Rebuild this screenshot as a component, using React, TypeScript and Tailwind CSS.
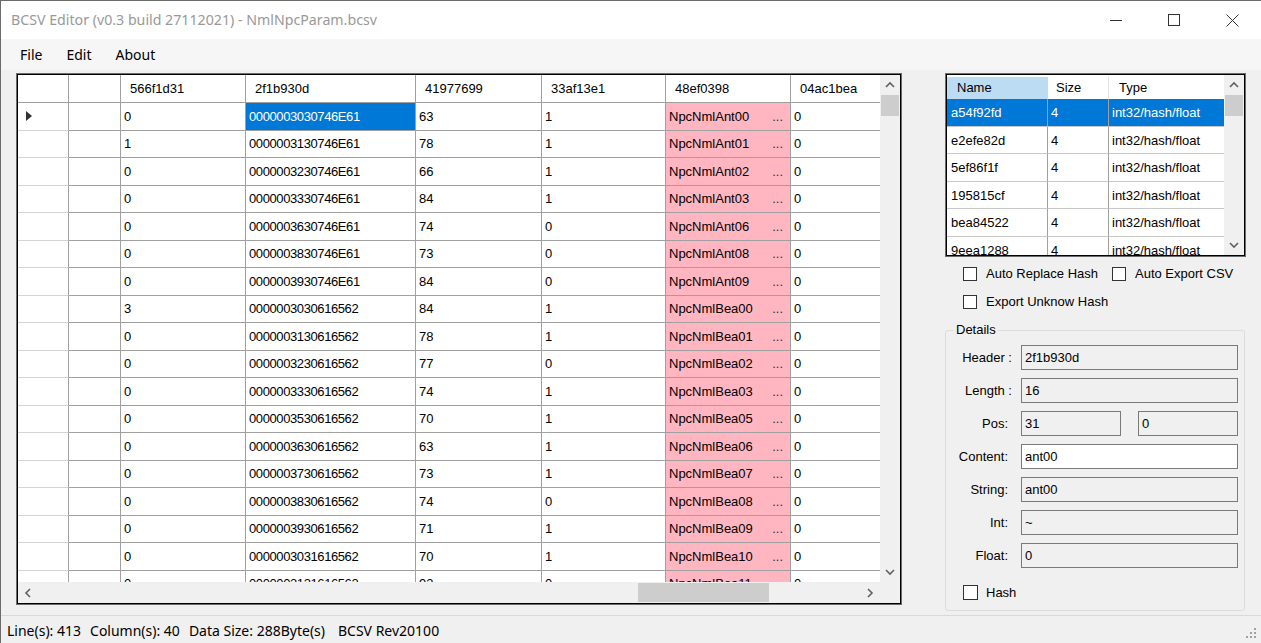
import React from "react";

const rows: string[][] = [
  ["0", "0000003030746E61", "63", "1", "NpcNmlAnt00", "0"],
  ["1", "0000003130746E61", "78", "1", "NpcNmlAnt01", "0"],
  ["0", "0000003230746E61", "66", "1", "NpcNmlAnt02", "0"],
  ["0", "0000003330746E61", "84", "1", "NpcNmlAnt03", "0"],
  ["0", "0000003630746E61", "74", "0", "NpcNmlAnt06", "0"],
  ["0", "0000003830746E61", "73", "0", "NpcNmlAnt08", "0"],
  ["0", "0000003930746E61", "84", "0", "NpcNmlAnt09", "0"],
  ["3", "0000003030616562", "84", "1", "NpcNmlBea00", "0"],
  ["0", "0000003130616562", "78", "1", "NpcNmlBea01", "0"],
  ["0", "0000003230616562", "77", "0", "NpcNmlBea02", "0"],
  ["0", "0000003330616562", "74", "1", "NpcNmlBea03", "0"],
  ["0", "0000003530616562", "70", "1", "NpcNmlBea05", "0"],
  ["0", "0000003630616562", "63", "1", "NpcNmlBea06", "0"],
  ["0", "0000003730616562", "73", "1", "NpcNmlBea07", "0"],
  ["0", "0000003830616562", "74", "0", "NpcNmlBea08", "0"],
  ["0", "0000003930616562", "71", "1", "NpcNmlBea09", "0"],
  ["0", "0000003031616562", "70", "1", "NpcNmlBea10", "0"],
  ["0", "0000003131616562", "93", "0", "NpcNmlBea11", "0"],
];

const listRows = ["a54f92fd", "e2efe82d", "5ef86f1f", "195815cf", "bea84522", "9eea1288"];

const UI = { fontFamily: '"Noto Sans", "Open Sans", sans-serif' };
const MS = { fontFamily: '"Liberation Sans", Arial, sans-serif' };

function Chevron({ dir }: { dir: "up" | "down" | "left" | "right" }) {
  const pts: Record<string, string> = {
    up: "1,6 5,2 9,6",
    down: "1,2 5,6 9,2",
    left: "6,1 2,5 6,9",
    right: "2,1 6,5 2,9",
  };
  const vertical = dir === "up" || dir === "down";
  return (
    <svg width={vertical ? 10 : 8} height={vertical ? 8 : 10} viewBox={vertical ? "0 0 10 8" : "0 0 8 10"}>
      <polyline points={pts[dir]} fill="none" stroke="#606060" strokeWidth="1.6" />
    </svg>
  );
}

function VScroll({ height }: { height: string }) {
  return (
    <div className={`w-[20px] ${height} bg-[#f0f0f0] flex flex-col shrink-0`}>
      <div className="h-[20px] flex items-center justify-center">
        <Chevron dir="up" />
      </div>
      <div className="h-[21px] mx-[1px] bg-[#cdcdcd]" />
      <div className="flex-1" />
      <div className="h-[20px] flex items-center justify-center">
        <Chevron dir="down" />
      </div>
    </div>
  );
}

function Check() {
  return <span className="block w-[14px] h-[14px] border border-[#333333] bg-white shrink-0" />;
}

const colW = ["w-[52px]", "w-[125px]", "w-[170px]", "w-[126px]", "w-[124px]", "w-[125px]", "w-[125px]"];
const headers = ["", "566f1d31", "2f1b930d", "41977699", "33af13e1", "48ef0398", "04ac1bea"];

function Grid() {
  return (
    <div className="w-[886px] h-[532px] border border-[#6a6a6a] shrink-0">
      <div className="w-full h-full border border-black flex flex-col bg-white">
        <div className="flex h-[507px]">
          <div className="w-[862px] h-full overflow-hidden flex flex-col text-[13px] text-black" style={MS}>
            <div className="flex h-[28px] shrink-0">
              <div className="w-[51px] shrink-0 border-r border-b border-[#a0a0a0]" />
              {headers.map((h, i) => (
                <div
                  key={i}
                  className={`${colW[i]} shrink-0 border-r border-b border-[#a0a0a0] flex items-center pl-[9px]`}
                >
                  {h}
                </div>
              ))}
            </div>
            {rows.map((r, ri) => (
              <div key={ri} className="flex h-[27.5px] shrink-0">
                <div className="w-[51px] shrink-0 border-r border-b border-r-[#a0a0a0] border-b-[#d4d4d4] flex items-center pl-[8px]">
                  {ri === 0 && (
                    <svg width="6" height="10" viewBox="0 0 6 10">
                      <polygon points="0,0 6,5 0,10" fill="#333333" />
                    </svg>
                  )}
                </div>
                <div className="w-[52px] shrink-0 border-r border-b border-[#a0a0a0]" />
                <div className="w-[125px] shrink-0 border-r border-b border-[#a0a0a0] flex items-center pl-[3px]">
                  {r[0]}
                </div>
                <div
                  className={`w-[170px] shrink-0 border-r border-b border-[#a0a0a0] flex items-center pl-[3px] tracking-[-0.4px] ${
                    ri === 0 ? "bg-[#0078d7] text-white" : ""
                  }`}
                >
                  {r[1]}
                </div>
                <div className="w-[126px] shrink-0 border-r border-b border-[#a0a0a0] flex items-center pl-[3px]">
                  {r[2]}
                </div>
                <div className="w-[124px] shrink-0 border-r border-b border-[#a0a0a0] flex items-center pl-[3px]">
                  {r[3]}
                </div>
                <div className="w-[125px] shrink-0 border-r border-b border-[#a0a0a0] bg-[#ffb6c1] flex items-center justify-between pl-[3px] pr-[7px]">
                  <span>{r[4]}</span>
                  <span className="text-[#333333]">...</span>
                </div>
                <div className="w-[125px] shrink-0 border-r border-b border-[#a0a0a0] flex items-center pl-[3px]">
                  {r[5]}
                </div>
              </div>
            ))}
          </div>
          <VScroll height="h-full" />
        </div>
        <div className="flex h-[21px] bg-[#f0f0f0]">
          <div className="w-[862px] flex">
            <div className="w-[20px] flex items-center justify-center">
              <Chevron dir="left" />
            </div>
            <div className="w-[600px]" />
            <div className="w-[131px] my-[1px] bg-[#cdcdcd]" />
            <div className="flex-1" />
            <div className="w-[20px] flex items-center justify-center">
              <Chevron dir="right" />
            </div>
          </div>
          <div className="w-[20px]" />
        </div>
      </div>
    </div>
  );
}

function List() {
  return (
    <div className="w-[301px] h-[184px] border border-[#6a6a6a] shrink-0">
      <div className="w-full h-full border border-black flex bg-white">
        <div className="w-[277px] h-full overflow-hidden flex flex-col text-[13px] text-black" style={MS}>
          <div className="flex h-[24px] shrink-0 pt-[2px]">
            <div className="w-[101px] bg-[#bcdcf4] border-r border-[#bcdcf4] flex items-center pl-[10px]">Name</div>
            <div className="w-[61px] border-r border-[#e5e5e5] flex items-center pl-[8px]">Size</div>
            <div className="w-[115px] flex items-center pl-[10px]">Type</div>
          </div>
          {listRows.map((n, i) => (
            <div
              key={n}
              className={`flex h-[27.5px] shrink-0 ${i === 0 ? "bg-[#0078d7] text-white" : ""}`}
            >
              <div className="w-[101px] border-r border-b border-r-[#a0a0a0] border-b-[#c8c8c8] flex items-center pl-[4px] pt-[1px]">
                {n}
              </div>
              <div className="w-[61px] border-r border-b border-r-[#a0a0a0] border-b-[#c8c8c8] flex items-center pl-[3px] pt-[1px]">
                4
              </div>
              <div className="w-[115px] border-b border-[#c8c8c8] flex items-center pl-[3px] pt-[1px]">
                int32/hash/float
              </div>
            </div>
          ))}
        </div>
        <VScroll height="h-full" />
      </div>
    </div>
  );
}

function Field({
  label,
  value,
  white,
  labelPr,
}: {
  label: string;
  value: string;
  white?: boolean;
  labelPr: string;
}) {
  return (
    <div className="flex items-center h-[25px] mb-[8px]">
      <div className={`w-[66px] text-right ${labelPr}`}>{label}</div>
      <div
        className={`ml-[9px] w-[217px] h-[25px] border border-[#7a7a7a] flex items-center pl-[3px] ${
          white ? "bg-white" : "bg-[#f0f0f0]"
        }`}
      >
        {value}
      </div>
    </div>
  );
}

export default function App() {
  return (
    <div className="w-[1261px] h-[643px] bg-[#f0f0f0] border-t border-l border-[#6b6b6b] flex flex-col overflow-hidden">
      {/* Title bar */}
      <div className="h-[38px] bg-white flex items-center shrink-0">
        <div className="pl-[10px] text-[14.2px] text-[#999999]" style={UI}>
          BCSV Editor (v0.3 build 27112021) - NmlNpcParam.bcsv
        </div>
        <div className="ml-auto flex h-full">
          <div className="w-[58px] h-full flex items-center justify-center">
            <svg width="12" height="12" viewBox="0 0 12 12">
              <line x1="0" y1="6.5" x2="12" y2="6.5" stroke="#333" strokeWidth="1" />
            </svg>
          </div>
          <div className="w-[58px] h-full flex items-center justify-center">
            <svg width="12" height="12" viewBox="0 0 12 12">
              <rect x="0.5" y="0.5" width="11" height="11" fill="none" stroke="#333" strokeWidth="1" />
            </svg>
          </div>
          <div className="w-[58px] h-full flex items-center justify-center">
            <svg width="13" height="13" viewBox="0 0 13 13">
              <line x1="0.5" y1="0.5" x2="12.5" y2="12.5" stroke="#333" strokeWidth="1" />
              <line x1="12.5" y1="0.5" x2="0.5" y2="12.5" stroke="#333" strokeWidth="1" />
            </svg>
          </div>
        </div>
      </div>

      {/* Menu bar */}
      <div className="h-[31px] bg-[#f6f6f6] flex items-center pl-[19px] gap-[24px] text-[14px] text-black shrink-0" style={UI}>
        <span>File</span>
        <span>Edit</span>
        <span>About</span>
      </div>

      {/* Main */}
      <div className="flex-1 flex pl-[15px] pt-[3px]">
        <Grid />
        <div className="ml-[43px] w-[301px] flex flex-col text-[13px] text-black" style={MS}>
          <List />
          <div className="flex items-center mt-[10px] h-[14px] pl-[18px]">
            <Check />
            <span className="ml-[9px]">Auto Replace Hash</span>
            <span className="ml-[14px]">
              <Check />
            </span>
            <span className="ml-[9px]">Auto Export CSV</span>
          </div>
          <div className="flex items-center mt-[14px] h-[14px] pl-[18px]">
            <Check />
            <span className="ml-[9px]">Export Unknow Hash</span>
          </div>
          <fieldset className="mt-[13px] w-[300px] border border-[#dcdcdc] rounded-[3px] pb-[10px]">
            <legend className="ml-[8px] px-[2px] leading-[16px]">Details</legend>
            <div className="mt-[7px]">
              <Field label="Header :" value="2f1b930d" labelPr="" />
              <Field label="Length :" value="16" labelPr="" />
              <div className="flex items-center h-[25px] mb-[8px]">
                <div className="w-[66px] text-right pr-[4px]">Pos:</div>
                <div className="ml-[9px] w-[100px] h-[25px] border border-[#7a7a7a] bg-[#f0f0f0] flex items-center pl-[3px]">
                  31
                </div>
                <div className="ml-[17px] w-[100px] h-[25px] border border-[#7a7a7a] bg-[#f0f0f0] flex items-center pl-[3px]">
                  0
                </div>
              </div>
              <Field label="Content:" value="ant00" white labelPr="pr-[4px]" />
              <Field label="String:" value="ant00" labelPr="pr-[4px]" />
              <Field label="Int:" value="~" labelPr="pr-[4px]" />
              <Field label="Float:" value="0" labelPr="pr-[4px]" />
            </div>
            <div className="flex items-center mt-[17px] h-[15px] pl-[17px]">
              <span className="block w-[15px] h-[15px] border border-[#333333] bg-white shrink-0" />
              <span className="ml-[8px]">Hash</span>
            </div>
          </fieldset>
        </div>
      </div>

      {/* Status bar */}
      <div className="h-[28px] border-t border-[#d9d9d9] flex items-center pt-[2px] pl-[6px] text-[14px] text-black shrink-0" style={UI}>
        <span>Line(s): 413</span>
        <span className="ml-[9px]">Column(s): 40</span>
        <span className="ml-[9px]">Data Size: 288Byte(s)</span>
        <span className="ml-[13px]">BCSV Rev20100</span>
        <div className="ml-auto mr-[4px] self-end mb-[4px]">
          <svg width="12" height="12" viewBox="0 0 12 12">
            <rect x="9" y="1" width="2" height="2" fill="#a0a0a0" />
            <rect x="5" y="5" width="2" height="2" fill="#a0a0a0" />
            <rect x="9" y="5" width="2" height="2" fill="#a0a0a0" />
            <rect x="1" y="9" width="2" height="2" fill="#a0a0a0" />
            <rect x="5" y="9" width="2" height="2" fill="#a0a0a0" />
            <rect x="9" y="9" width="2" height="2" fill="#a0a0a0" />
          </svg>
        </div>
      </div>
    </div>
  );
}
